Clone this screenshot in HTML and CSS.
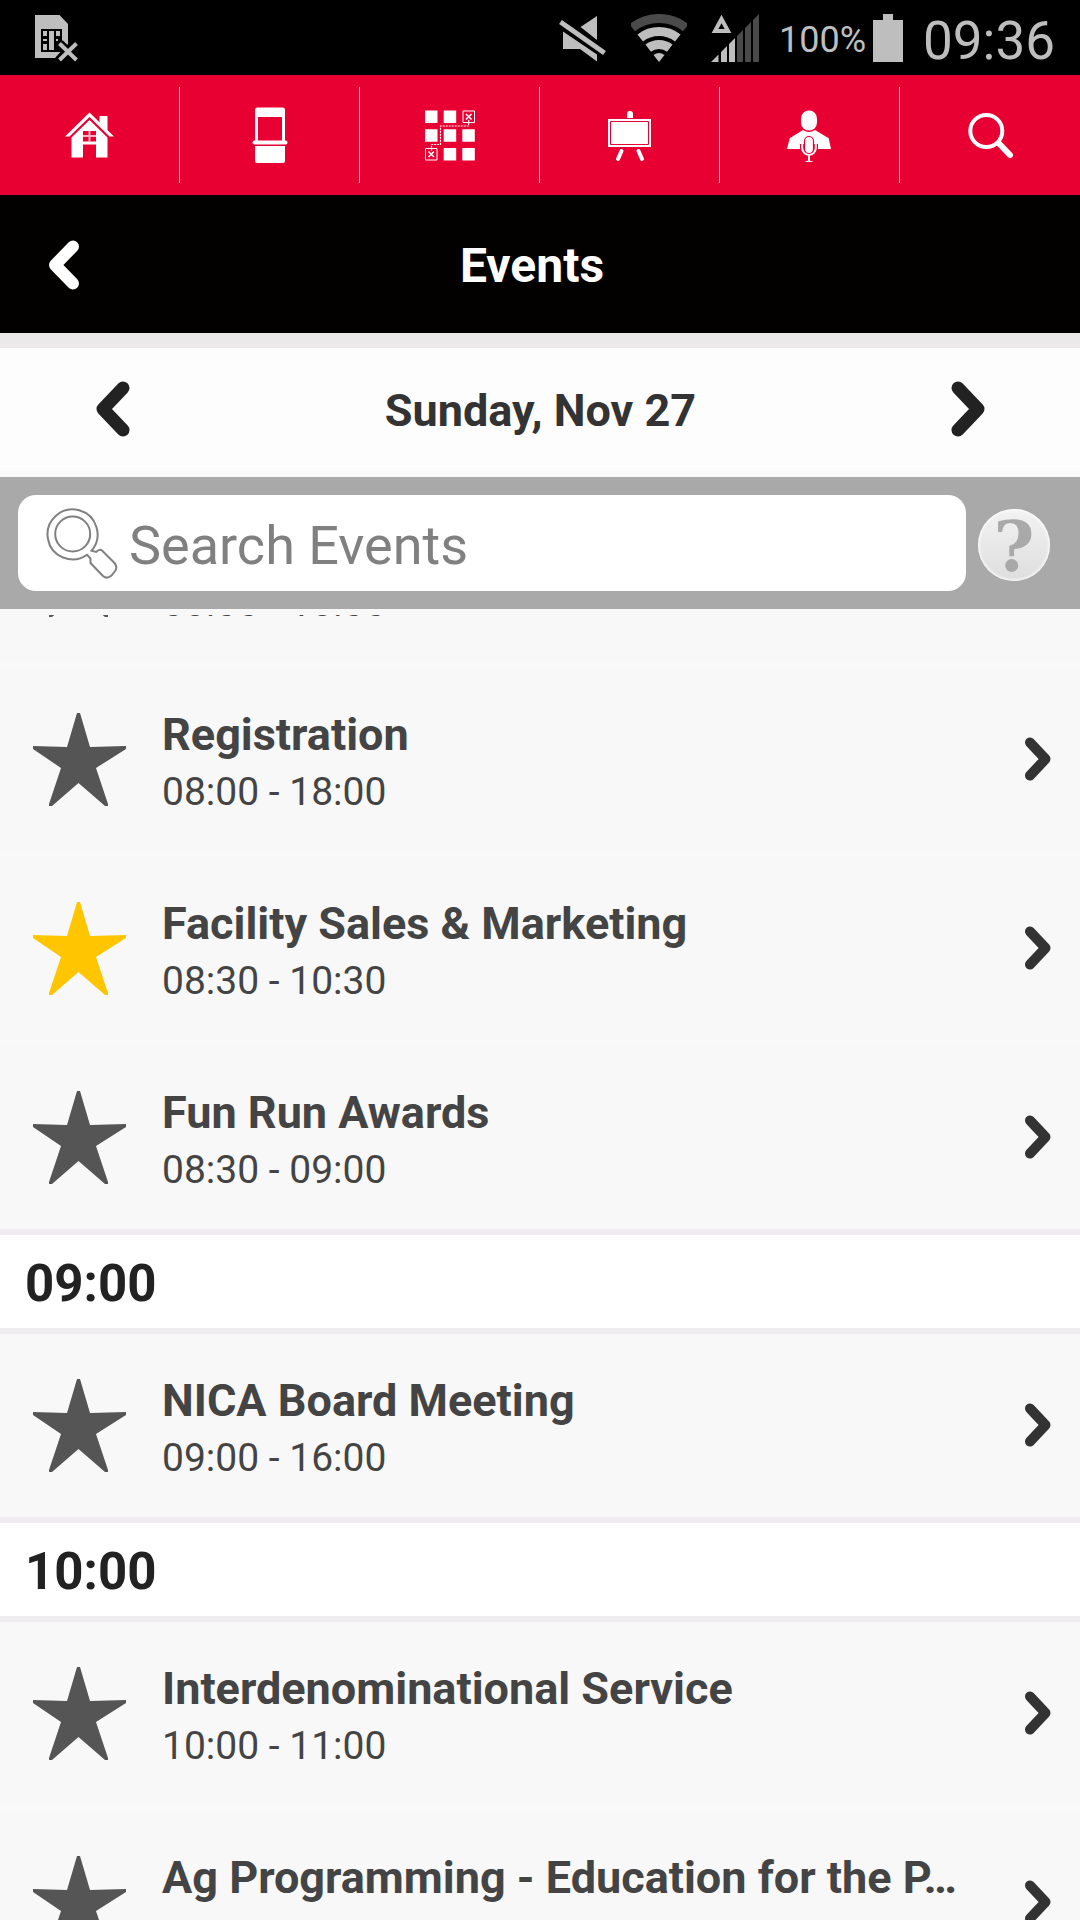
FILE: index.html
```html
<!DOCTYPE html>
<html lang="en">

<head>
    <meta charset="UTF-8">
    <meta name="viewport" content="width=device-width">
    <title>Events</title>
    <link rel="stylesheet" href="styles.css">
</head>

<body>
    <!-- shared shapes -->
    <svg class="defs" aria-hidden="true">
        <symbol id="star" viewBox="0 0 93 93">
            <path d="M44 0h3l10 34 36-1v3L63 55l12 36v2h-3L45.500 70 19 93h-3v-2l12-36L0 36v-3l34 1z"/>
        </symbol>
        <symbol id="next" viewBox="0 0 26 44">
            <path d="M5 5.500L20.500 22 5 38.500" fill="none" stroke="currentColor" stroke-width="10" stroke-linecap="round" stroke-linejoin="round"/>
        </symbol>
    </svg>

    <div class="status">
        <svg width="43" height="48" viewBox="0 -1 43 48">
            <path d="M0 0h24.500L33 9v20L20 43H0z" fill="#bebebe"/>
            <path d="M6 14h21v23H6z"/>
            <path d="M8 16h4v5H8zM8 24h4v2H8zM8 29h4v6H8zM14 16h5v19h-5zM21 16h4v5h-4zM21 24h2v2h-2z" fill="#bebebe"/>
            <path d="M24.500 28.500l17 16.500M41.500 28.500l-17 16.500" stroke="#000" stroke-width="9"/>
            <path d="M24.500 28.500l17 16.500M41.500 28.500l-17 16.500" stroke="#bebebe" stroke-width="4"/>
        </svg>
        <div class="statusRight">
            <svg width="48" height="48" viewBox="0 0 48 48">
                <path d="M21.500 13L38 2v24zM4 17.500l34 23v7L21 35H4z" fill="#bebebe"/>
                <path d="M1.500 8l44 31" stroke="#000" stroke-width="10"/>
                <path d="M1.500 8l44 31" stroke="#bebebe" stroke-width="5"/>
            </svg>
            <svg width="56" height="48" viewBox="0 0 56 48">
                <g fill="none" stroke="#bebebe" stroke-width="9">
                    <path d="M1.200 13.700a43.500 43.500 0 0 1 53.600 0" stroke="#4a4a4a"/>
                    <path d="M9.200 24a30.500 30.500 0 0 1 37.600 0"/>
                    <path d="M17.200 34.100a17.600 17.600 0 0 1 21.600 0"/>
                </g>
                <path d="M28 48l-5.500-7a9 9 0 0 1 11 0z" fill="#bebebe"/>
            </svg>
            <svg width="48" height="48" viewBox="0 0 48 48">
                <path d="M0 48l7.500-7.500V48zM10 48V38l6-6v16zM18 48V30l6-6v24z" fill="#bebebe"/>
                <path d="M26 48V22l6-6v32zM34 48V14l6-6v40zM42 48V6l6-6v48z" fill="#4a4a4a"/>
                <path d="M10.500 5l6.500 12H4z" fill="none" stroke="#bebebe" stroke-width="4"/>
            </svg>
            <span class="percent">100%</span>
            <svg width="30" height="48" viewBox="0 0 30 48">
                <path d="M10 0h10v6h10v42H0V6h10z" fill="#bebebe"/>
            </svg>
            <span class="clock">09:36</span>
        </div>
    </div>

    <nav class="nav">
        <a href="#" aria-label="Home">
            <svg viewBox="0 0 60 60" fill="#fff">
                <path d="M39.500 11H47.500V27L39.500 19z"/>
                <path d="M5 31.500L29.500 7.500 54 31.500H49.500L29.500 12 9.500 31.500z"/>
                <path d="M29.500 15L47.500 32.500V52.500H36V39.500H23V52.500H11.500V32.500z"/>
                <path d="M23 26h13v10.500H23z" fill="#e80033"/>
                <path d="M29.500 26v11M23 31h13" stroke="#f9b3c2" stroke-width="2"/>
            </svg>
        </a>
        <a href="#" aria-label="Exhibitors">
            <svg viewBox="0 0 60 60" fill="#fff">
                <path d="M17.500 2.500h25q2.500 0 2.500 2.500v31h-3V12H18v24h-3V5q0-2.500 2.500-2.500z"/>
                <rect x="12.500" y="35.500" width="35" height="4" rx="2"/>
                <path d="M15 41h30v15q0 2-2 2H17q-2 0-2-2z"/>
            </svg>
        </a>
        <a href="#" aria-label="Floor plan">
            <svg viewBox="0 0 60 60" fill="#fff">
                <path d="M5 5.500h12.500V18H5zM23.700 5.500h12.500V18H23.700zM5 24.300h12.500v12.500H5zM23.700 24.300h12.500v12.500H23.700zM42.300 24.300h12.500v12.500H42.300zM23.700 43h12.500v12.500H23.700zM42.300 43h12.500v12.500H42.300z"/>
                <g fill="none" stroke="#fff">
                    <path d="M43 6h11.500v11.500H43zM5.500 43.500H17V55H5.500z"/>
                    <path d="M46 9l5.500 5.500M51.500 9L46 14.500M8.500 46.500l5.500 5.500M14 46.500L8.500 52" stroke-width="1.600"/>
                    <path d="M48.700 15v6H20.500v18.500h-9V46" stroke-width="1.200" stroke-dasharray="2 1"/>
                </g>
            </svg>
        </a>
        <a href="#" aria-label="Sessions">
            <svg viewBox="0 0 60 60" fill="#fff">
                <path d="M27 13V9a3 3 0 0 1 6 0v4z"/>
                <path d="M8 14h43v28H8z"/>
                <path d="M10.500 16.500h38v23h-38z" fill="none" stroke="#e80033"/>
                <path d="M21.500 46L18 54M38.500 46l3.500 8" stroke="#fff" stroke-width="4" stroke-linecap="round"/>
            </svg>
        </a>
        <a href="#" aria-label="Speakers">
            <svg viewBox="0 0 60 60" fill="#fff">
                <path d="M23 25q6 4 12 0l13.700 8.300L51 44H7l2.700-10.700z"/>
                <rect x="21" y="5.500" width="16" height="20" rx="8"/>
                <path d="M22 39v4a7 7 0 0 0 14 0v-4" fill="#e80033" stroke="#e80033" stroke-width="4"/>
                <path d="M22.200 39v4a6.800 6.800 0 0 0 13.600 0v-4M29 50v6" fill="none" stroke="#fff" stroke-width="2"/>
                <rect x="24.500" y="31.500" width="9" height="17" rx="4.500" stroke="#e80033" stroke-width="1.200"/>
                <path d="M24.500 57q4.500-3 9 0z"/>
            </svg>
        </a>
        <a href="#" aria-label="Search">
            <svg viewBox="0 0 60 60" fill="none" stroke="#fff">
                <circle cx="26.300" cy="26" r="16" stroke-width="4"/>
                <path d="M39 38.500l11 11.500" stroke-width="6" stroke-linecap="round"/>
                <path d="M37 36.500l4 4" stroke-width="4"/>
            </svg>
        </a>
    </nav>

    <header class="title">
        <button type="button" class="back" aria-label="Back">
            <svg width="32" height="50" viewBox="0 0 32 50">
                <path d="M25 6.500L7 25l18 18.500" fill="none" stroke="currentColor" stroke-width="12" stroke-linecap="round" stroke-linejoin="round"/>
            </svg>
        </button>
        <h1>Events</h1>
    </header>

    <div class="dateBar">
        <button type="button" aria-label="Previous day">
            <svg width="34" height="56" viewBox="0 0 34 56">
                <path d="M27 7L7 28l20 21" fill="none" stroke="currentColor" stroke-width="13" stroke-linecap="round" stroke-linejoin="round"/>
            </svg>
        </button>
        <h2>Sunday, Nov 27</h2>
        <button type="button" aria-label="Next day">
            <svg width="34" height="56" viewBox="0 0 34 56">
                <path d="M7 7l20 21L7 49" fill="none" stroke="currentColor" stroke-width="13" stroke-linecap="round" stroke-linejoin="round"/>
            </svg>
        </button>
    </div>

    <form class="searchBar">
        <label class="searchBox">
            <svg width="72" height="72" viewBox="0 0 72 72" fill="none" stroke="#808080" stroke-width="2">
                <path d="M45.500 43.700a25 25 0 1 0-4.500 4.100l3.500 3.700v4.500l12.500 13q4 3.500 8.500-.5l4-5q2-4-1-7.500L56 43.500q-2.500-2-6 1.500z"/>
                <circle cx="26.700" cy="27" r="17.500"/>
            </svg>
            <input type="text" placeholder="Search Events" aria-label="Search Events">
        </label>
        <button type="button" class="help" aria-label="Help">?</button>
    </form>

    <main class="list" id="list">
        <ul>
            <li class="event">
                <button type="button" class="star" aria-label="Favorite"><svg><use href="#star"/></svg></button>
                <a href="#"><span class="text"><b class="name"></b><span class="time">08:00 - 18:00</span></span><svg class="arrow"><use href="#next"/></svg></a>
            </li>
            <li class="event">
                <button type="button" class="star" aria-label="Favorite"><svg><use href="#star"/></svg></button>
                <a href="#"><span class="text"><b class="name">Registration</b><span class="time">08:00 - 18:00</span></span><svg class="arrow"><use href="#next"/></svg></a>
            </li>
            <li class="event">
                <button type="button" class="star active" aria-label="Favorite"><svg><use href="#star"/></svg></button>
                <a href="#"><span class="text"><b class="name">Facility Sales &amp; Marketing</b><span class="time">08:30 - 10:30</span></span><svg class="arrow"><use href="#next"/></svg></a>
            </li>
            <li class="event">
                <button type="button" class="star" aria-label="Favorite"><svg><use href="#star"/></svg></button>
                <a href="#"><span class="text"><b class="name">Fun Run Awards</b><span class="time">08:30 - 09:00</span></span><svg class="arrow"><use href="#next"/></svg></a>
            </li>
        </ul>
        <h3 class="hour">09:00</h3>
        <ul>
            <li class="event">
                <button type="button" class="star" aria-label="Favorite"><svg><use href="#star"/></svg></button>
                <a href="#"><span class="text"><b class="name">NICA Board Meeting</b><span class="time">09:00 - 16:00</span></span><svg class="arrow"><use href="#next"/></svg></a>
            </li>
        </ul>
        <h3 class="hour">10:00</h3>
        <ul>
            <li class="event">
                <button type="button" class="star" aria-label="Favorite"><svg><use href="#star"/></svg></button>
                <a href="#"><span class="text"><b class="name">Interdenominational Service</b><span class="time">10:00 - 11:00</span></span><svg class="arrow"><use href="#next"/></svg></a>
            </li>
            <li class="event">
                <button type="button" class="star" aria-label="Favorite"><svg><use href="#star"/></svg></button>
                <a href="#"><span class="text"><b class="name">Ag Programming - Education for the P…</b><span class="time">10:15 - 12:15</span></span><svg class="arrow"><use href="#next"/></svg></a>
            </li>
        </ul>
    </main>

    <script>
        var oList = document.getElementById('list');
        var aStar = oList.getElementsByClassName('star');

        for (var i = 0; i < aStar.length; i++) {
            aStar[i].onclick = function() {
                this.classList.toggle('active');
            }
        }

        oList.scrollTop = 136;
    </script>
</body>

</html>
```
FILE: styles.css
```css
* {
    margin: 0;
    padding: 0;
    box-sizing: border-box;
    list-style: none;
    text-decoration: none;
}

body {
    display: flex;
    flex-direction: column;
    height: 100vh;
    background-color: #f8f8f8;
    font-family: Roboto, "Liberation Sans", sans-serif;
    color: #444;
}

svg {
    display: block;
    flex: none;
}

button {
    border: 0;
    background: none;
    font-family: inherit;
    color: inherit;
}

.defs {
    position: absolute;
    width: 0;
    height: 0;
}

/* status bar */
.status {
    flex: none;
    display: flex;
    align-items: center;
    justify-content: space-between;
    height: 75px;
    padding: 0 25px 0 35px;
    background-color: #000;
    color: #bebebe;
}

.statusRight {
    display: flex;
    align-items: center;
}

.statusRight svg + svg {
    margin-left: 24px;
}

.percent {
    margin: 0 7px 0 20px;
    padding-top: 5px;
    font-size: 36px;
}

.clock {
    margin-left: 20px;
    padding-top: 6px;
    font-size: 53px;
    line-height: 60px;
}

/* icon nav */
.nav {
    flex: none;
    display: flex;
    height: 120px;
    padding: 12px 0;
    background-color: #e80033;
}

.nav a {
    flex: 1;
    display: flex;
    align-items: center;
    justify-content: center;
    border-right: 1px solid #fbc5d1;
}

.nav a:last-child {
    border-right-color: transparent;
}

.nav svg {
    width: 60px;
    height: 60px;
}

/* page title */
.title {
    flex: none;
    position: relative;
    display: flex;
    align-items: center;
    justify-content: center;
    height: 138px;
    padding: 2px 16px 0 0;
    background-color: #030000;
    color: #fff;
}

.title h1 {
    font-size: 48px;
}

.back {
    position: absolute;
    left: 48px;
}

.dateBar {
    flex: none;
    display: flex;
    align-items: center;
    justify-content: space-between;
    height: 144px;
    padding: 0 95px 2px 96px;
    border-top: 15px solid #ebe9ea;
    border-bottom: 6px solid #f8f8f8;
    background-color: #fdfdfd;
    color: #222;
}

.dateBar h2 {
    padding-top: 4px;
    font-size: 45px;
    color: #333;
}

/* search */
.searchBar {
    flex: none;
    display: flex;
    align-items: center;
    gap: 12px;
    height: 132px;
    margin-bottom: 6px;
    padding: 0 30px 0 18px;
    background-color: #a9a9a9;
}

.searchBox {
    flex: 1;
    display: flex;
    align-items: center;
    gap: 11px;
    height: 96px;
    padding: 0 28px;
    border-radius: 18px;
    background-color: #fff;
}

.searchBox input {
    flex: 1;
    min-width: 0;
    height: 96px;
    padding-top: 4px;
    border: 0;
    outline: 0;
    background: none;
    font-family: inherit;
    font-size: 54px;
    color: #444;
}

.searchBox input::placeholder {
    color: #808080;
}

.help {
    width: 72px;
    height: 72px;
    margin-top: 3px;
    border-radius: 50%;
    background: linear-gradient(#f2f2f2, #dedede);
    box-shadow: inset 0 0 3px 1px #fff;
    font: bold 70px/76px "DejaVu Serif", serif;
    color: #a9a9a9;
}

/* events */
.list {
    flex: 1;
    min-height: 0;
    overflow-y: auto;
    scrollbar-width: none;
}

.event {
    display: flex;
    align-items: center;
    height: 183px;
    padding: 0 29px 0 33px;
}

.event + .event {
    height: 189px;
    border-top: 6px solid #f9f9f9;
}

.star {
    width: 93px;
    height: 93px;
    margin-right: 36px;
    fill: #555;
}

.star svg {
    width: 93px;
    height: 93px;
}

.star.active {
    fill: #ffc600;
}

.event a {
    flex: 1;
    min-width: 0;
    display: flex;
    align-items: center;
    color: #444;
}

.text {
    flex: 1;
    min-width: 0;
    padding-top: 16px;
    padding-bottom: 6px;
}

.name,
.time {
    display: block;
    overflow: hidden;
    white-space: nowrap;
    text-overflow: ellipsis;
}

.name {
    height: 54px;
    font-size: 45px;
    line-height: 54px;
}

.time {
    font-size: 39px;
    line-height: 60px;
}

.arrow {
    width: 26px;
    height: 44px;
    margin-bottom: 1px;
    color: #333;
}

.hour {
    height: 105px;
    padding: 2px 25px 0;
    border-top: 6px solid #eeecee;
    border-bottom: 6px solid #eeecee;
    background-color: #fff;
    font-size: 51px;
    line-height: 93px;
    color: #222;
}
```
